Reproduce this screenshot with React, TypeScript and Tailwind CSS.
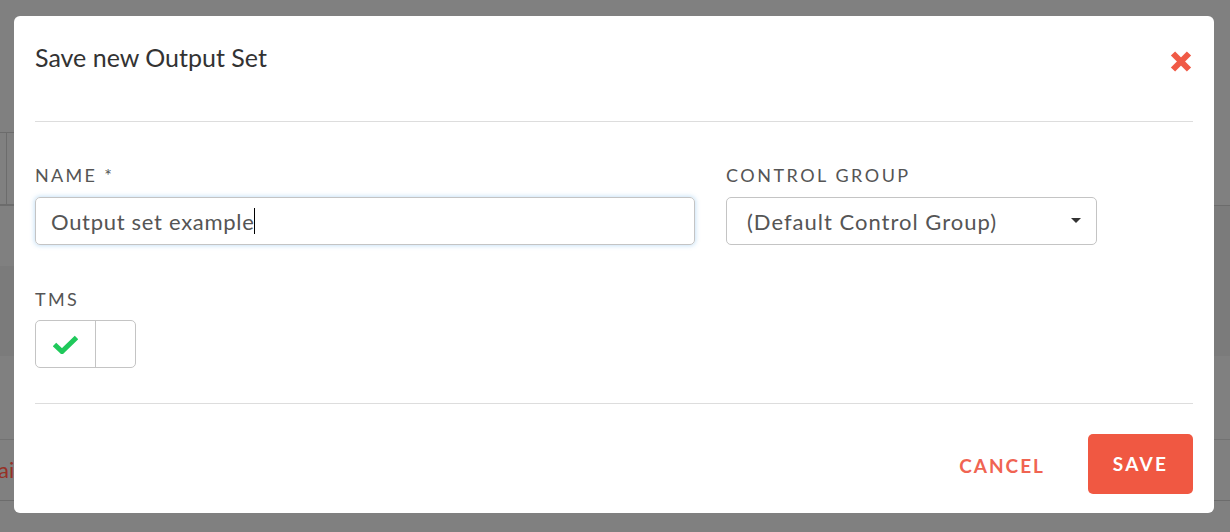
import React from "react";

export default function App() {
  return (
    <div
      className="relative w-[1230px] h-[532px] overflow-hidden bg-[#808080]"
      style={{ fontFamily: "Lato, 'Open Sans', sans-serif" }}
    >
      {/* dimmed page behind the overlay */}
      <div className="flex flex-col w-full h-full">
        <div className="h-[132px] shrink-0" />
        <div className="h-[73px] shrink-0 flex">
          <div className="w-[14px] border-y border-[#6c6c6c] flex">
            <div className="w-[7px] border-r border-[#6c6c6c]" />
          </div>
          <div className="flex-1" />
        </div>
        <div className="h-[1px] shrink-0 bg-[#6c6c6c]" />
        <div className="h-[60px] shrink-0 flex">
          <div className="flex-1" />
          <div className="w-[16px] bg-[#7b7b7b]" />
        </div>
        <div className="h-[90px] shrink-0 bg-[#7b7b7b]" />
        <div className="h-[83px] shrink-0" />
        <div className="h-[1px] shrink-0 bg-[#727272]" />
        <div className="h-[60px] shrink-0 flex items-center">
          <span className="ml-[-2px] text-[22px] leading-none text-[#963126] whitespace-nowrap">
            aining
          </span>
        </div>
        <div className="h-[1px] shrink-0 bg-[#6c6c6c]" />
        <div className="flex-1" />
      </div>

      {/* modal */}
      <div className="absolute left-[14px] top-[16px] w-[1200px] h-[497px] bg-white rounded-[6px] flex flex-col">
        <div className="h-[105px] shrink-0 px-[21px] pt-[26px] flex justify-between items-start">
          <h2 className="text-[25px] leading-[30px] text-[#333333] font-normal">
            Save new Output Set
          </h2>
          <svg
            width="22"
            height="23"
            viewBox="0 0 22 23"
            className="mt-[8px] mr-[1px]"
          >
            <path
              d="M3 3.5 L19 19.5 M19 3.5 L3 19.5"
              stroke="#f05a46"
              strokeWidth="6"
              strokeLinecap="butt"
            />
          </svg>
        </div>
        <div className="mx-[21px] h-px shrink-0 bg-[#dddddd]" />

        <div className="px-[21px] pt-[43px] pb-[35px] flex flex-col">
          <div className="flex gap-[31px]">
            <div className="w-[660px] flex flex-col">
              <label className="text-[18px] leading-[20px] tracking-[2.3px] text-[#555555] uppercase">
                Name *
              </label>
              <div className="mt-[12px] h-[48px] rounded-[5px] border border-[#c4c4c4] shadow-[0_0_4px_1px_rgba(102,175,233,0.35)] flex items-center px-[15px] text-[22px] tracking-[0.7px] text-[#555555]">
                <span>Output set example</span>
                <span className="w-px h-[26px] bg-black ml-[-0.5px]" />
              </div>
            </div>
            <div className="w-[371px] flex flex-col">
              <label className="text-[18px] leading-[20px] tracking-[2.5px] text-[#555555] uppercase">
                Control Group
              </label>
              <div className="mt-[12px] h-[48px] rounded-[5px] border border-[#c4c4c4] flex items-center justify-between pl-[20px] pr-[15px] text-[22px] tracking-[1px] text-[#555555]">
                <span>(Default Control Group)</span>
                <svg width="10" height="6" viewBox="0 0 10 6">
                  <path d="M0 0 L10 0 L5 5 Z" fill="#333333" />
                </svg>
              </div>
            </div>
          </div>

          <label className="mt-[44px] text-[18px] leading-[20px] tracking-[2.3px] text-[#555555] uppercase">
            TMS
          </label>
          <div className="mt-[11px] w-[101px] h-[48px] rounded-[5px] border border-[#c4c4c4] flex">
            <div className="w-[60px] border-r border-[#c4c4c4] flex items-center justify-center">
              <svg width="25" height="19" viewBox="0 0 25 19">
                <path
                  d="M1.5 9.5 L9 16.5 L23.5 2.5"
                  stroke="#1fc95b"
                  strokeWidth="5"
                  fill="none"
                  strokeLinejoin="miter"
                />
              </svg>
            </div>
            <div className="flex-1" />
          </div>
        </div>

        <div className="mx-[21px] h-px shrink-0 bg-[#dddddd]" />

        <div className="flex-1 px-[21px] pt-[30px] flex justify-end items-start">
          <button className="h-[60px] pt-[5px] text-[19px] font-bold tracking-[2px] text-[#f06452] uppercase mr-[43px]">
            Cancel
          </button>
          <button className="h-[60px] w-[105px] rounded-[5px] bg-[#f05842] text-white text-[19px] font-bold tracking-[2.3px] uppercase">
            Save
          </button>
        </div>
      </div>
    </div>
  );
}
